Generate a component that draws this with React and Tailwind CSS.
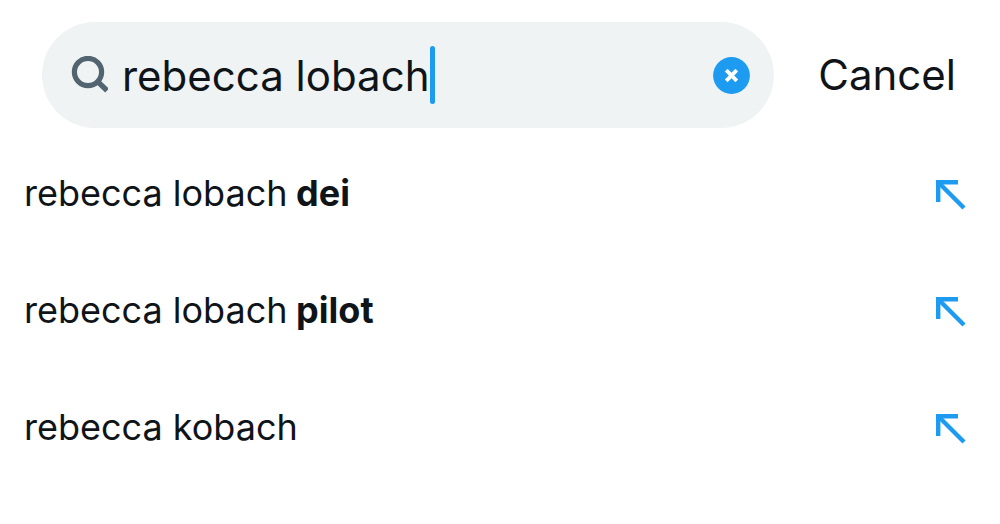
import { useRef, useState } from "react";

const suggestions = [
  { typed: "rebecca lobach", rest: "dei" },
  { typed: "rebecca lobach", rest: "pilot" },
  { typed: "rebecca kobach", rest: "" },
];

function SearchIcon() {
  return (
    <svg viewBox="0 0 38 38" className="size-[38px] shrink-0" fill="none" stroke="#536471" strokeWidth="5.2" aria-hidden="true">
      <circle cx="18" cy="16" r="13.6" />
      <path d="M27.5 25.5 L37 34.5" />
    </svg>
  );
}

function ClearIcon() {
  return (
    <svg viewBox="0 0 37 37" className="size-[37px]" aria-hidden="true">
      <circle cx="18.5" cy="18.5" r="18.4" fill="#1d9bf0" />
      <path d="M13.2 13.2 L23.8 23.8 M23.8 13.2 L13.2 23.8" stroke="#fff" strokeWidth="3.8" />
    </svg>
  );
}

function FillArrow() {
  return (
    <svg viewBox="0 0 30 30" className="size-[30px]" fill="none" stroke="#1d9bf0" strokeWidth="4.4" aria-hidden="true">
      <path d="M22 2.2 H2.2 V22" />
      <path d="M2.5 2.5 L28 28" />
    </svg>
  );
}

export default function App() {
  const [query, setQuery] = useState("rebecca lobach");
  const input = useRef(null);

  return (
    <main className="min-h-screen bg-white font-[Inter,'Liberation_Sans',sans-serif] text-[#0f1419]">
      <form role="search" className="flex items-center gap-11 pt-[22px] pr-11 pl-[42px]" onSubmit={(e) => e.preventDefault()}>
        <div
          className="flex h-[106px] min-w-0 flex-1 items-center rounded-full bg-[#eff3f4] pr-6 pl-7"
          onClick={() => input.current?.focus()}
        >
          <SearchIcon />
          <input
            ref={input}
            type="text"
            aria-label="Search"
            value={query}
            onChange={(e) => setQuery(e.target.value)}
            className="field-sizing-content ml-3.5 min-w-0 bg-transparent pt-0.5 text-[42px] leading-[58px] caret-transparent outline-none"
          />
          <span className="h-[58px] w-[5px] shrink-0 rounded-full bg-[#1d9bf0]" />
          <button type="button" aria-label="Clear search" className="ml-auto shrink-0" onClick={() => setQuery("")}>
            <ClearIcon />
          </button>
        </div>
        <button type="button" className="shrink-0 text-[42px] leading-[58px]">Cancel</button>
      </form>

      <ul className="pt-2">
        {suggestions.map(({ typed, rest }) => (
          <li key={typed + rest} className="flex h-[117px] items-center justify-between pr-[34px] pl-6">
            <a href="#search" className="pb-1 text-[36px] leading-[48px]">
              {typed}
              {rest && <b> {rest}</b>}
            </a>
            <button type="button" aria-label={`Use ${typed} ${rest}`.trim()} onClick={() => setQuery(`${typed} ${rest}`.trim())}>
              <FillArrow />
            </button>
          </li>
        ))}
      </ul>
    </main>
  );
}
